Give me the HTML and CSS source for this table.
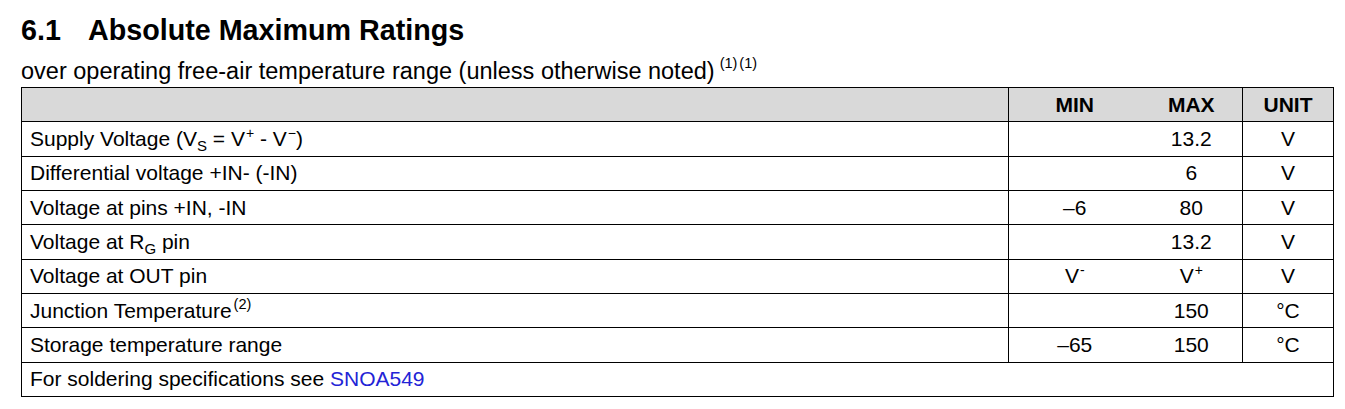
FILE: index.html
```html
<!DOCTYPE html>
<html>
<head>
<meta charset="utf-8">
<link rel="stylesheet" href="styles.css">
</head>
<body>
<div class="page">
  <h1 class="title"><span class="num">6.1</span>Absolute Maximum Ratings</h1>
  <p class="sub">over operating free-air temperature range (unless otherwise noted)<sup class="note">(1)</sup><sup class="note">(1)</sup></p>
  <table class="ratings">
    <colgroup>
      <col class="c-param"><col class="c-min"><col class="c-max"><col class="c-unit">
    </colgroup>
    <thead>
      <tr class="head"><th></th><th>MIN</th><th>MAX</th><th>UNIT</th></tr>
    </thead>
    <tbody>
      <tr><td class="p">Supply Voltage (V<sub>S</sub> = V<sup>+</sup> - V<sup>−</sup>)</td><td></td><td>13.2</td><td>V</td></tr>
      <tr><td class="p">Differential voltage +IN- (-IN)</td><td></td><td>6</td><td>V</td></tr>
      <tr><td class="p">Voltage at pins +IN, -IN</td><td>–6</td><td>80</td><td>V</td></tr>
      <tr><td class="p">Voltage at R<sub>G</sub> pin</td><td></td><td>13.2</td><td>V</td></tr>
      <tr><td class="p">Voltage at OUT pin</td><td>V<sup>-</sup></td><td>V<sup>+</sup></td><td>V</td></tr>
      <tr><td class="p">Junction Temperature<sup class="note2">(2)</sup></td><td></td><td>150</td><td>°C</td></tr>
      <tr><td class="p">Storage temperature range</td><td>–65</td><td>150</td><td>°C</td></tr>
      <tr><td class="p" colspan="4">For soldering specifications see <a class="link" href="#">SNOA549</a></td></tr>
    </tbody>
  </table>
</div>
</body>
</html>
```
FILE: styles.css
```css
html, body {
  margin: 0;
  padding: 0;
  background: #fff;
}
.page {
  padding: 13px 12px 0 21px;
  font-family: "Liberation Sans", Arial, sans-serif;
  color: #000;
}
.title {
  margin: 0;
  font-size: 28.7px;
  font-weight: bold;
  line-height: 34px;
  height: 34px;
  color: #000;
}
.title .num {
  display: inline-block;
  width: 67px;
}
.sub {
  margin: 10px 0 2px 0;
  font-size: 23.5px;
  line-height: 28px;
  height: 28px;
}
.note {
  font-size: 14.5px;
  vertical-align: 0;
  position: relative;
  top: -11px;
  margin-left: 5px;
}
.note + .note {
  margin-left: 2px;
}
.ratings {
  border-collapse: collapse;
  width: 1312px;
  table-layout: fixed;
  font-size: 21px;
}
.c-param { width: 987px; }
.c-min { width: 132px; }
.c-max { width: 102px; }
.c-unit { width: 91px; }
.ratings th, .ratings td {
  border-top: 1px solid #000;
  border-bottom: 1px solid #000;
  height: 33.33px;
  padding: 0;
  text-align: center;
  font-weight: normal;
}
.ratings th:first-child, .ratings td:first-child {
  border-left: 1px solid #000;
  border-right: 1px solid #000;
}
.ratings th:last-child, .ratings td:last-child {
  border-left: 1px solid #000;
  border-right: 1px solid #000;
}
.ratings .head th {
  background: #d9d9d9;
  font-weight: bold;
}
.ratings td.p {
  text-align: left;
  padding-left: 8px;
}
sub {
  font-size: 15px;
  vertical-align: 0;
  position: relative;
  top: 5px;
}
sup {
  font-size: 14px;
  vertical-align: 0;
  position: relative;
  top: -8px;
  margin-left: 1px;
}
.note2 {
  font-size: 14.5px;
  top: -9px;
  margin-left: 2px;
}
.link {
  color: #2323d6;
  text-decoration: none;
}
```
